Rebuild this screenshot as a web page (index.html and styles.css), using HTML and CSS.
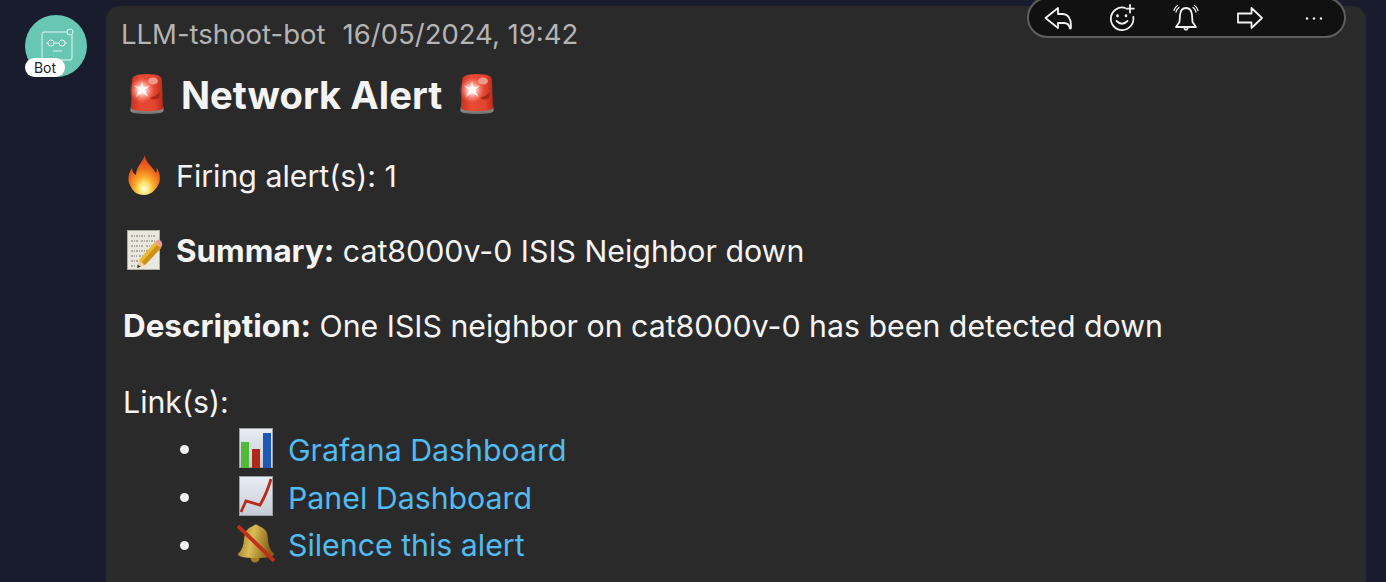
FILE: index.html
```html
<!DOCTYPE html>
<html lang="en">
<head>
<meta charset="UTF-8">
<meta name="viewport" content="width=device-width, initial-scale=1.0">
<title>LLM-tshoot-bot</title>
<link rel="stylesheet" href="styles.css">
</head>
<body>
<svg class="defs" width="0" height="0" aria-hidden="true">
    <defs>
        <linearGradient id="sirenRed" x1="0" y1="0" x2="1" y2="0">
            <stop offset="0" stop-color="#c8301f"/>
            <stop offset="0.3" stop-color="#e84a34"/>
            <stop offset="0.75" stop-color="#e2452f"/>
            <stop offset="1" stop-color="#b72a1b"/>
        </linearGradient>
        <linearGradient id="sirenBase" x1="0" y1="0" x2="0" y2="1">
            <stop offset="0" stop-color="#b8b2ae"/>
            <stop offset="1" stop-color="#6c6a68"/>
        </linearGradient>
        <radialGradient id="sirenFlash">
            <stop offset="0" stop-color="#ffffff"/>
            <stop offset="0.3" stop-color="#ffd8d0"/>
            <stop offset="1" stop-color="#ff7a64" stop-opacity="0"/>
        </radialGradient>
        <radialGradient id="flame" cx="0.5" cy="0.85" r="0.8">
            <stop offset="0" stop-color="#fffbe0"/>
            <stop offset="0.18" stop-color="#ffe878"/>
            <stop offset="0.38" stop-color="#fbad2c"/>
            <stop offset="0.65" stop-color="#ee6a1e"/>
            <stop offset="1" stop-color="#e03c1c"/>
        </radialGradient>
        <linearGradient id="bell" x1="0" y1="0" x2="1" y2="0.2">
            <stop offset="0" stop-color="#94701e"/>
            <stop offset="0.45" stop-color="#dcbc56"/>
            <stop offset="1" stop-color="#846014"/>
        </linearGradient>
        <linearGradient id="chartBg" x1="0" y1="0" x2="0" y2="1">
            <stop offset="0" stop-color="#e8edf4"/>
            <stop offset="1" stop-color="#c6ccd6"/>
        </linearGradient>
        <symbol id="siren" viewBox="0 0 38 40">
            <path d="M2.500 35 Q2.500 31 6 31 H32 Q35.500 31 35.500 35 V37 Q35.500 40 19 40 Q2.500 40 2.500 37 Z" fill="url(#sirenBase)"/>
            <path d="M3 34 L4 6 Q4 0 19 0 Q34 0 34 6 L35 34 Q35 37 19 37 Q3 37 3 34 Z" fill="url(#sirenRed)"/>
            <ellipse cx="25" cy="7" rx="5" ry="3.500" fill="#f09a8a"/>
            <path d="M22 24 Q28 22 32 18 L31 24 Q26 27 22 24 Z" fill="#a82818"/>
            <ellipse cx="14" cy="16" rx="13" ry="13" fill="url(#sirenFlash)"/>
            <path d="M14 7 L15.200 14 L22 11.500 L16.500 16 L20.500 23 L14 18 L8 23 L11.500 16 L6 11.500 L12.800 14 Z" fill="#fff"/>
        </symbol>
        <symbol id="fire" viewBox="0 0 38 40">
            <path d="M20 0 C20 7 27 11 31 18 C32 16 32 14 31 12 C36 18 36 27 32 32 C29 37 24 40 19 40 C13 40 8 37 6 32 C2 26 3 19 7 13 C7 17 9 19 11 20 C11 12 17 8 20 0 Z" fill="url(#flame)"/>
        </symbol>
        <symbol id="memo" viewBox="0 0 38 40">
            <rect x="2.500" y="0.500" width="32" height="39" fill="#e9e7de" stroke="#aaa9a4"/>
            <path d="M6 6 H20 M23 6 H30 M6 11 H14 M16 11 H30 M6 16 H19 M21 16 H27 M6 21 H23 M6 26 H12 M14 26 H18 M6 31 H13 M6 36 H11" stroke="#77756f" stroke-width="1.100" stroke-dasharray="2 1 1 1"/>
            <path d="M12 38 L14 30 L30 12 L36 18 L20 35 Z" fill="#eeb92e"/>
            <path d="M16 33 L32 15 L36 18 L20 35 Z" fill="#cf9018"/>
            <path d="M30 12 L32 10 Q34 9 36 11 L37 13 Q38 15 36 18 Z" fill="#ea9a98"/>
            <path d="M12 38 L14 30 L20 35 Z" fill="#e8d0a4"/>
            <path d="M12 38 L12.800 34.500 L15.500 36.800 Z" fill="#333"/>
        </symbol>
        <symbol id="barChart" viewBox="0 0 38 40">
            <rect x="2.500" y="0.500" width="33" height="39" fill="url(#chartBg)" stroke="#9a9fa6"/>
            <rect x="4" y="14" width="8" height="26" fill="#52b838"/>
            <rect x="15" y="21" width="8" height="19" fill="#b02818"/>
            <rect x="26" y="5" width="8" height="35" fill="#2058b8"/>
        </symbol>
        <symbol id="lineChart" viewBox="0 0 38 40">
            <rect x="2.500" y="0.500" width="33" height="39" fill="url(#chartBg)" stroke="#9a9fa6"/>
            <path d="M4 36 L9 25 L23 29 Q30 17 34 3" fill="none" stroke="#b82a1c" stroke-width="2.800"/>
        </symbol>
        <symbol id="mutedBell" viewBox="0 0 38 40">
            <circle cx="18" cy="35" r="4.500" fill="#a87c20"/>
            <path d="M16 3 Q19 0 22 3 Q31 6 31 16 Q31 25 37 31 Q37 35 19 35 Q1 35 1 31 Q7 25 7 16 Q7 6 16 3 Z" fill="url(#bell)"/>
            <path d="M1 3 L37 38" stroke="#c42c1c" stroke-width="3.800"/>
        </symbol>
    </defs>
</svg>

<div class="page">
    <div class="avatar">
        <svg class="avatar-robot" viewBox="0 0 62 62" fill="none" stroke="#e6f5f0" stroke-width="1">
            <path d="M42 17 H19 Q17 17 17 19 V43 Q17 45 19 45 H45 Q47 45 47 43 V20"/>
            <circle cx="45" cy="17" r="3"/>
            <circle cx="26" cy="28" r="3"/>
            <circle cx="37" cy="28" r="3"/>
            <path d="M29 28 H34 M21 28 H23 M40 28 H42 M28 36 H37"/>
        </svg>
        <span class="bot-badge">Bot</span>
    </div>

    <div class="message">
        <div class="toolbar">
            <svg class="tool" viewBox="0 0 28 28" fill="none" stroke="#f2f2f2" stroke-width="1.800" stroke-linejoin="round"><path d="M14 4 L1.500 14 L14 24 V19 H20 Q25 19 26 24.500 H26.800 Q27.500 17 25 13.500 Q23 10 18 10 H14 Z"/></svg>
            <svg class="tool" viewBox="0 0 28 28" fill="none" stroke="#f2f2f2" stroke-width="1.800" stroke-linecap="round"><path d="M17 3.800 A11.300 11.300 0 1 0 25.300 13"/><path d="M8.500 17 Q14 22.500 19.500 17"/><path d="M9.500 11.500 V12 M18 11.500 V12" stroke-width="2.600"/><path d="M22 1 V8.500 M18.300 4.700 H25.800"/></svg>
            <svg class="tool" viewBox="0 0 28 28" fill="none" stroke="#f2f2f2" stroke-width="1.800" stroke-linecap="round" stroke-linejoin="round"><path d="M14 4 Q19.500 4 20 11 L20.500 18 L24 23 H4 L7.500 18 L8 11 Q8.500 4 14 4 Z"/><path d="M11.500 23 Q14 28.500 16.500 23"/><path d="M4 8 Q4.500 5 7 3.500 M2 6.500 Q3 3 5.500 1.500 M24 8 Q23.500 5 21 3.500 M26 6.500 Q25 3 22.500 1.500" stroke-width="1.300"/></svg>
            <svg class="tool" viewBox="0 0 28 28" fill="none" stroke="#f2f2f2" stroke-width="1.800" stroke-linejoin="round"><path d="M2 9.500 H15.500 V4 L26 14 L15.500 24 V18.500 H2 Z"/></svg>
            <svg class="tool" viewBox="0 0 28 28" fill="#f2f2f2"><circle cx="7" cy="14.500" r="1.200"/><circle cx="14" cy="14.500" r="1.200"/><circle cx="21" cy="14.500" r="1.200"/></svg>
        </div>

        <div class="message-head">
            <span>LLM-tshoot-bot</span>
            <span>16/05/2024, 19:42</span>
        </div>

        <h1 class="alert-title">
            <svg class="emoji"><use href="#siren"/></svg>
            <span>Network Alert</span>
            <svg class="emoji"><use href="#siren"/></svg>
        </h1>

        <p class="line"><svg class="emoji"><use href="#fire"/></svg> Firing alert(s): 1</p>
        <p class="line"><svg class="emoji"><use href="#memo"/></svg> <span class="rich"><b>Summary:</b> cat8000v-0 ISIS Neighbor down</span></p>
        <p class="line"><span class="rich"><b>Description:</b> One ISIS neighbor on cat8000v-0 has been detected down</span></p>
        <p class="line">Link(s):</p>

        <ul class="links">
            <li><svg class="emoji"><use href="#barChart"/></svg><a href="#">Grafana Dashboard</a></li>
            <li><svg class="emoji"><use href="#lineChart"/></svg><a href="#">Panel Dashboard</a></li>
            <li><svg class="emoji"><use href="#mutedBell"/></svg><a href="#">Silence this alert</a></li>
        </ul>
    </div>
</div>
</body>
</html>
```

FILE: styles.css
```css
html, body {
    height: 100%;
}

body {
    margin: 0;
    overflow: hidden;
    background-color: #181c2c;
    color: #f4f4f4;
    font-family: Inter, "Liberation Sans", sans-serif;
    font-size: 30.3px;
}

.defs {
    position: absolute;
}

.page {
    display: flex;
    gap: 19px;
    height: 100%;
    box-sizing: border-box;
    padding: 6px 20px 0 25px;
}

.avatar {
    position: relative;
    flex: none;
    width: 62px;
    height: 62px;
    margin-top: 9px;
    border-radius: 50%;
    background-color: #67c7b2;
}

.avatar-robot {
    position: absolute;
    top: 0;
    left: 0;
    width: 62px;
    height: 62px;
}

.bot-badge {
    position: absolute;
    left: 0;
    bottom: 0;
    width: 40px;
    height: 19px;
    border-radius: 10px;
    background-color: #fff;
    color: #222;
    font-size: 14px;
    line-height: 19px;
    text-align: center;
}

.message {
    position: relative;
    flex: 1;
    padding: 10px 17px 0;
    border-radius: 14px 14px 0 0;
    background-color: #2a2a2a;
}

.toolbar {
    position: absolute;
    top: -9px;
    right: 20px;
    display: flex;
    align-items: center;
    justify-content: space-between;
    box-sizing: border-box;
    width: 319px;
    height: 41px;
    padding: 0 16px 0 15px;
    border: 2px solid #5e5e5e;
    border-radius: 21px;
    background-color: #111;
}

.tool {
    width: 28px;
    height: 28px;
}

.message-head {
    display: flex;
    gap: 17px;
    margin-left: -2px;
    color: #b4b4b4;
    font-size: 27.5px;
    line-height: 36px;
}

.alert-title {
    display: flex;
    align-items: center;
    gap: 15.5px;
    margin: 13px 0 0 4.5px;
    font-size: 38.2px;
    font-weight: 700;
    line-height: 61px;
}

.emoji {
    flex: none;
    width: 38px;
    height: 40px;
    margin-bottom: 4px;
    filter: blur(0.4px);
}

b {
    font-size: 31.4px;
}

.line {
    display: flex;
    align-items: center;
    gap: 13px;
    height: 47px;
    margin: 28.3px 0 0;
    line-height: 47px;
    white-space: nowrap;
}

.line:first-of-type {
    margin-top: 27.3px;
}

.line .emoji {
    margin-left: 2px;
}

.rich {
    margin-bottom: 2px;
}

.links {
    margin: 0;
    padding: 0 0 0 57px;
    list-style: none;
}

.links li {
    display: flex;
    align-items: center;
    gap: 13px;
    height: 47.6px;
}

.links li::before {
    content: "";
    flex: none;
    width: 9px;
    height: 9px;
    margin-right: 35px;
    border-radius: 50%;
    background-color: #f4f4f4;
}

.links a {
    color: #52bbf0;
    text-decoration: none;
}
```
